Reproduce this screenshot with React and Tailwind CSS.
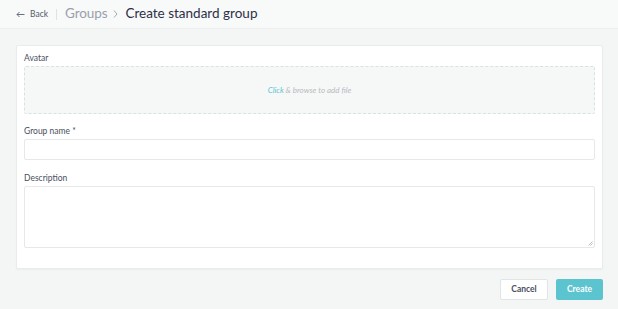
import React from "react";

export default function App() {
  return (
    <div
      className="w-[618px] h-[309px] bg-[#f4f6f6] flex flex-col overflow-hidden"
      style={{ fontFamily: "Lato, 'Open Sans', sans-serif" }}
    >
      <div className="h-[29px] bg-[#f8f9f9] border-b border-[#eef0f0] flex items-center pl-[16px]">
        <svg width="9" height="7" viewBox="0 0 9 7" className="text-[#6b7080]" fill="none" stroke="currentColor" strokeWidth="1">
          <path d="M8.5 3.5H1M3.5 1L1 3.5L3.5 6" />
        </svg>
        <span className="ml-[5px] text-[8.5px] text-[#555a6a]">Back</span>
        <span className="ml-[8px] w-px h-[11px] bg-[#dfe2e4]" />
        <span className="ml-[8px] text-[13.5px] tracking-[-0.1px] text-[#9aa0aa] leading-none">Groups</span>
        <svg width="5" height="8" viewBox="0 0 5 8" className="ml-[6px] text-[#a5aab3]" fill="none" stroke="currentColor" strokeWidth="1">
          <path d="M1 0.5L4 4L1 7.5" />
        </svg>
        <span className="ml-[7px] text-[13.5px] text-[#2d3046] leading-none">Create standard group</span>
      </div>
      <div className="pl-[16px] pr-[15px] pt-[16px]">
        <div className="bg-white rounded-[2px] border border-[#e9ecec] shadow-[0_1px_2px_rgba(0,0,0,0.04)] px-[7px] pt-[8px] pb-[20px]">
          <div className="text-[8.5px] text-[#4a4f60] leading-[9px] mb-[3px]">Avatar</div>
          <div className="h-[48px] bg-[#f6f8f8] border border-dashed border-[#d7e3e3] rounded-[2px] flex items-center justify-center text-[8px] italic text-[#b6babf]">
            <span className="text-[#5cc3cf]">Click</span>
            <span>&nbsp;&amp; browse to add file</span>
          </div>
          <div className="text-[8.5px] text-[#4a4f60] leading-[9px] mt-[13px] mb-[3px]">Group name *</div>
          <div className="h-[21px] border border-[#e6e9e9] rounded-[2px]" />
          <div className="text-[8.5px] text-[#4a4f60] leading-[9px] mt-[14px] mb-[3px]">Description</div>
          <div className="relative h-[62px] border border-[#e6e9e9] rounded-[2px]">
            <svg width="5" height="5" viewBox="0 0 5 5" className="absolute right-[1px] bottom-[1px] text-[#9aa0a5]" stroke="currentColor" strokeWidth="0.7">
              <path d="M0.5 4.5L4.5 0.5M2.5 4.5L4.5 2.5" />
            </svg>
          </div>
        </div>
      </div>
      <div className="flex justify-end gap-[8px] px-[15px] pt-[10px]">
        <button className="w-[48px] h-[21px] bg-white border border-[#e0e5e5] rounded-[2px] text-[8.5px] font-bold text-[#4a4f60]">Cancel</button>
        <button className="w-[47px] h-[21px] bg-[#5bc4cf] rounded-[2px] text-[8.5px] font-bold text-white">Create</button>
      </div>
    </div>
  );
}
